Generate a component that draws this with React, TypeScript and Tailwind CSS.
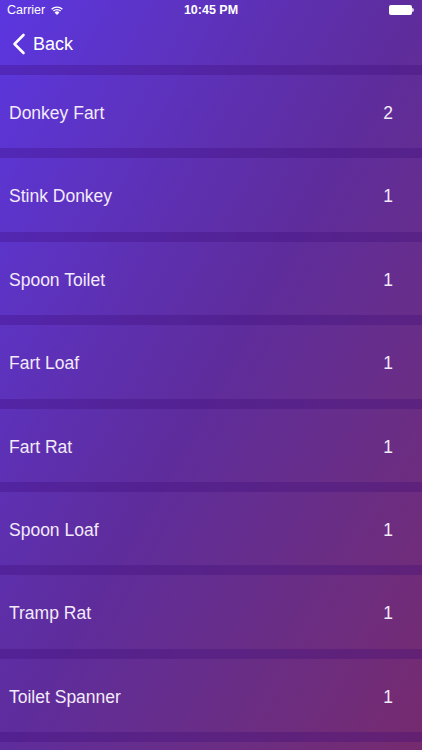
const rows: [string, number][] = [
  ["Donkey Fart", 2],
  ["Stink Donkey", 1],
  ["Spoon Toilet", 1],
  ["Fart Loaf", 1],
  ["Fart Rat", 1],
  ["Spoon Loaf", 1],
  ["Tramp Rat", 1],
  ["Toilet Spanner", 1],
];

function Wifi() {
  return (
    <svg width="14" height="10" viewBox="0 0 14 10" fill="white">
      <path d="M7 10 L4.6 7.4 A3.4 3.4 0 0 1 9.4 7.4 Z" />
      <path d="M2.9 5.6 A5.8 5.8 0 0 1 11.1 5.6 L10.1 6.6 A4.4 4.4 0 0 0 3.9 6.6 Z" />
      <path d="M1.1 3.8 A8.4 8.4 0 0 1 12.9 3.8 L11.9 4.8 A7 7 0 0 0 2.1 4.8 Z" />
    </svg>
  );
}

export default function App() {
  return (
    <div
      className="w-[422px] h-[750px] overflow-hidden bg-linear-to-br from-[#5b36e0] via-[#5e2c9c] to-[#762a6e] text-[#f3eafa]"
      style={{ fontFamily: '"Liberation Sans", Arial, sans-serif' }}
    >
      <div className="h-[20px] flex items-center justify-between px-[7px] text-[12.5px] text-white">
        <div className="flex items-center gap-[5px] w-[120px]">
          <span>Carrier</span>
          <Wifi />
        </div>
        <span className="font-bold">10:45 PM</span>
        <div className="w-[120px] flex justify-end pr-[1px]">
          <div className="flex items-center">
            <div className="w-[23px] h-[10px] bg-white rounded-[2px]" />
            <div className="w-[2px] h-[4px] bg-white/80 rounded-r-sm" />
          </div>
        </div>
      </div>
      <div className="h-[45px] flex items-center pl-[12px] gap-[7px] pt-[3px]">
        <svg width="14" height="22" viewBox="0 0 14 22" fill="none" stroke="white" strokeWidth="2.6" strokeLinecap="round" strokeLinejoin="round">
          <path d="M11.5 2 L2.5 11 L11.5 20" />
        </svg>
        <span className="text-[18px] text-white">Back</span>
      </div>
      <div className="flex flex-col">
        {rows.map(([name, n]) => (
          <div key={name} className="flex flex-col">
            <div className="h-[10px] bg-[#3a0a78]/30" />
            <div className="h-[73.4px] flex items-center justify-between pl-[9px] pr-[29px] pt-[3px] text-[17.5px]">
              <span>{name}</span>
              <span>{n}</span>
            </div>
          </div>
        ))}
        <div className="h-[10px] bg-[#3a0a78]/30" />
      </div>
    </div>
  );
}
